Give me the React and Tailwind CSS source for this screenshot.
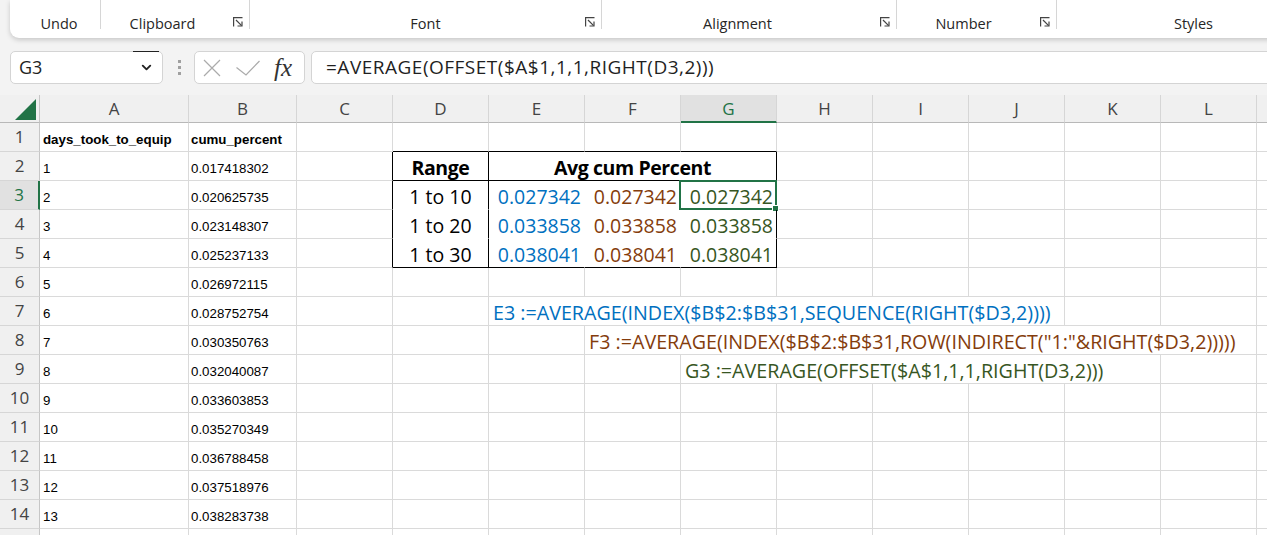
import React from 'react';
import { ChevronDown } from 'lucide-react';

const GRID = 'border-r-[#dadada] border-b-[#dadada]';

const dataRows = [
  ['days_took_to_equip', 'cumu_percent'],
  ['1', '0.017418302'],
  ['2', '0.020625735'],
  ['3', '0.023148307'],
  ['4', '0.025237133'],
  ['5', '0.026972115'],
  ['6', '0.028752754'],
  ['7', '0.030350763'],
  ['8', '0.032040087'],
  ['9', '0.033603853'],
  ['10', '0.035270349'],
  ['11', '0.036788458'],
  ['12', '0.037518976'],
  ['13', '0.038283738'],
  ['', ''],
];

const letters = ['D', 'E', 'F', 'G', 'H', 'I', 'J', 'K', 'L', 'M'];

function Launcher() {
  return (
    <svg width="10" height="10" viewBox="0 0 10 10" fill="none" stroke="#444" strokeWidth="1.2">
      <path d="M0.6 9.5V0.6h8.9" />
      <path d="M3 3l5.6 5.6" />
      <path d="M4.5 9h4.5V4.5" />
    </svg>
  );
}

function Group({ w, label, pad = '', launcher = true }) {
  return (
    <div className={`relative ${w} h-full shrink-0 flex items-end justify-center pb-[7px] ${pad}`}>
      <span className="text-[14.5px] text-[#262626] leading-none">{label}</span>
      {launcher && (
        <div className="absolute right-[6px] bottom-[11px]">
          <Launcher />
        </div>
      )}
    </div>
  );
}

function Sep() {
  return <div className="w-px h-[29px] bg-[#d6d6d6] shrink-0" />;
}

function Cell({ w = 'w-[96px]', b = GRID, className = '', children }) {
  return (
    <div className={`${w} h-full shrink-0 border-r border-b ${b} ${className}`}>{children}</div>
  );
}

const numCls = "flex items-center justify-end pr-[3px] pt-[3px] text-[19.5px] font-['Open_Sans',sans-serif]";
const ctrCls = "flex items-center justify-center pt-[3px] text-[19.5px] font-['Open_Sans',sans-serif] text-black";
const boldCls = 'font-bold tracking-[-0.4px]';
const fmlCls = "flex items-center pt-[3px] pl-[4px] text-[19.7px] font-['Open_Sans',sans-serif] whitespace-nowrap";

function plain(keys) {
  return keys.map((k) => <Cell key={k} />);
}

function restOfRow(r) {
  if (r === 1) {
    return [
      <Cell key="C" />,
      <Cell key="D" b="border-r-[#dadada] border-b-black" />,
      <Cell key="E" b="border-r-[#dadada] border-b-black" />,
      <Cell key="F" b="border-r-[#dadada] border-b-black" />,
      <Cell key="G" b="border-r-[#dadada] border-b-black" />,
      ...plain(['H', 'I', 'J', 'K', 'L', 'M']),
    ];
  }
  if (r === 2) {
    return [
      <Cell key="C" b="border-r-black border-b-[#dadada]" />,
      <Cell key="D" b="border-r-black border-b-black" className={`${ctrCls} ${boldCls}`}>Range</Cell>,
      <Cell key="EG" w="w-[288px]" b="border-r-black border-b-black" className={`${ctrCls} ${boldCls}`}>
        Avg cum Percent
      </Cell>,
      ...plain(['H', 'I', 'J', 'K', 'L', 'M']),
    ];
  }
  if (r >= 3 && r <= 5) {
    const vals = { 3: ['1 to 10', '0.027342'], 4: ['1 to 20', '0.033858'], 5: ['1 to 30', '0.038041'] }[r];
    const bb = r === 5 ? 'border-b-black' : 'border-b-white';
    return [
      <Cell key="C" b="border-r-black border-b-[#dadada]" />,
      <Cell key="D" b={`border-r-black ${bb}`} className={ctrCls}>{vals[0]}</Cell>,
      <Cell key="E" b={`border-r-white ${bb}`} className={`${numCls} text-[#0070c0]`}>{vals[1]}</Cell>,
      <Cell key="F" b={`border-r-white ${bb}`} className={`${numCls} text-[#843c0c]`}>{vals[1]}</Cell>,
      <Cell key="G" b={`border-r-black ${bb}`} className={`${numCls} text-[#375623] relative`}>
        {vals[1]}
        {r === 3 && (
          <div className="absolute -left-[2px] -right-[1px] -top-[1px] -bottom-[1px] border-2 border-[#217346]">
            <div className="absolute -right-[4px] -bottom-[4px] w-[7px] h-[7px] bg-[#217346] border border-white" />
          </div>
        )}
      </Cell>,
      ...plain(['H', 'I', 'J', 'K', 'L', 'M']),
    ];
  }
  if (r === 7) {
    return [
      ...plain(['C', 'D']),
      <Cell key="EJ" w="w-[576px]" className={`${fmlCls} text-[#0070c0]`}>
        E3 :=AVERAGE(INDEX($B$2:$B$31,SEQUENCE(RIGHT($D3,2))))
      </Cell>,
      ...plain(['K', 'L', 'M']),
    ];
  }
  if (r === 8) {
    return [
      ...plain(['C', 'D', 'E']),
      <Cell key="FL" w="w-[672px]" className={`${fmlCls} text-[#843c0c]`}>
        F3 :=AVERAGE(INDEX($B$2:$B$31,ROW(INDIRECT("1:"&RIGHT($D3,2)))))
      </Cell>,
      ...plain(['M']),
    ];
  }
  if (r === 9) {
    return [
      ...plain(['C', 'D', 'E', 'F']),
      <Cell key="GK" w="w-[480px]" className={`${fmlCls} text-[#375623]`}>
        G3 :=AVERAGE(OFFSET($A$1,1,1,RIGHT(D3,2)))
      </Cell>,
      ...plain(['L', 'M']),
    ];
  }
  return plain(['C', ...letters]);
}

export default function App() {
  return (
    <div className="w-[1267px] h-[535px] overflow-hidden bg-[#f3f3f3] font-['Open_Sans',sans-serif]">
      {/* Ribbon */}
      <div className="h-[38px] ml-[10px] w-[1330px] bg-white rounded-bl-[9px] shadow-[0_2px_5px_rgba(0,0,0,0.18)] flex">
        <Group w="w-[90px]" label="Undo" pad="pl-[8px]" launcher={false} />
        <Sep />
        <Group w="w-[148px]" label="Clipboard" pad="pr-[25px]" />
        <Sep />
        <Group w="w-[351px]" label="Font" />
        <Sep />
        <Group w="w-[294px]" label="Alignment" pad="pr-[23px]" />
        <Sep />
        <Group w="w-[159px]" label="Number" pad="pr-[26px]" />
        <Sep />
        <Group w="w-[273px]" label="Styles" launcher={false} />
      </div>

      {/* Formula bar */}
      <div className="mt-[13px] h-[33px] flex pl-[10px]">
        <div className="relative w-[153px] h-full shrink-0 bg-white rounded-[5px] border border-[#d4d4d4] flex items-center pl-[8px] pr-[8px]">
          <span className="text-[18px] text-[#1f1f1f] flex-1">G3</span>
          <ChevronDown size={15} strokeWidth={3} color="#222" />
          <div className="absolute top-[-1px] right-[3px] w-[26px] h-px bg-[#222]" />
        </div>
        <div className="w-[31px] shrink-0 flex flex-col items-center justify-center gap-[3px] pl-[2px]">
          <div className="w-[3px] h-[3px] bg-[#a0a0a0]" />
          <div className="w-[3px] h-[3px] bg-[#a0a0a0]" />
          <div className="w-[3px] h-[3px] bg-[#a0a0a0]" />
        </div>
        <div className="w-[111px] h-full shrink-0 bg-white rounded-[5px] border border-[#d4d4d4] flex items-center pl-[8px]">
          <svg width="18" height="18" viewBox="0 0 18 18" fill="none" stroke="#ababab" strokeWidth="1.2">
            <path d="M1 1l16 16M17 1L1 17" />
          </svg>
          <svg className="ml-[15px]" width="24" height="16" viewBox="0 0 24 16" fill="none" stroke="#ababab" strokeWidth="1.2">
            <path d="M0.5 7.5l9.5 7.5L23.5 1" />
          </svg>
          <span className="ml-[14px] font-['Liberation_Serif',serif] italic text-[25px] text-[#333] leading-none">fx</span>
        </div>
        <div className="ml-[6px] w-[1000px] h-full shrink-0 bg-white rounded-[5px] border border-[#d4d4d4] flex items-center pl-[14px]">
          <span className="text-[19px] tracking-[0.5px] text-[#1f1f1f] whitespace-nowrap">=AVERAGE(OFFSET($A$1,1,1,RIGHT(D3,2)))</span>
        </div>
      </div>

      {/* Sheet */}
      <div className="mt-[11px] bg-white">
        {/* column headers */}
        <div className="h-[28px] flex bg-[#f0f0f0] text-[17px] text-[#444]">
          <div className="w-[40px] h-full shrink-0 border-r border-b border-r-[#c6c6c6] border-b-[#b8b8b8] flex items-end justify-end pr-[3px] pb-[2px]">
            <svg width="21" height="21" viewBox="0 0 21 21">
              <path d="M21 0V21H0Z" fill="#217346" />
            </svg>
          </div>
          {['A', 'B', 'C', 'D', 'E', 'F', 'G', 'H', 'I', 'J', 'K', 'L', ''].map((c, i) => (
            <div
              key={i}
              className={`${i === 0 ? 'w-[149px]' : i === 1 ? 'w-[108px]' : 'w-[96px]'} h-full shrink-0 border-r border-r-[#d6d6d6] flex items-center justify-center pt-[1px] ${
                c === 'G'
                  ? 'border-b-2 border-b-[#217346] bg-[#e1e1e1] text-[#217346]'
                  : 'border-b border-b-[#b8b8b8]'
              }`}
            >
              {c}
            </div>
          ))}
        </div>

        {/* rows */}
        {dataRows.map((d, idx) => {
          const r = idx + 1;
          const bold = r === 1 ? 'font-bold' : '';
          return (
            <div key={r} className="h-[29px] flex">
              <div
                className={`w-[40px] h-full shrink-0 border-b border-b-[#d6d6d6] flex items-center justify-center text-[17px] ${
                  r === 3
                    ? 'bg-[#e1e1e1] text-[#217346] border-r-2 border-r-[#217346]'
                    : 'bg-[#f0f0f0] text-[#444] border-r border-r-[#c6c6c6]'
                }`}
              >
                {r < 15 ? r : ''}
              </div>
              <Cell w="w-[149px]" className={`flex items-end pb-[5px] pl-[3px] text-[13.3px] font-['Liberation_Sans',Arial,sans-serif] text-black leading-none ${bold}`}>
                {d[0]}
              </Cell>
              <Cell w="w-[108px]" className={`flex items-end pb-[5px] pl-[2px] text-[13.3px] font-['Liberation_Sans',Arial,sans-serif] text-black leading-none ${bold}`}>
                {d[1]}
              </Cell>
              {restOfRow(r)}
            </div>
          );
        })}
      </div>
    </div>
  );
}
